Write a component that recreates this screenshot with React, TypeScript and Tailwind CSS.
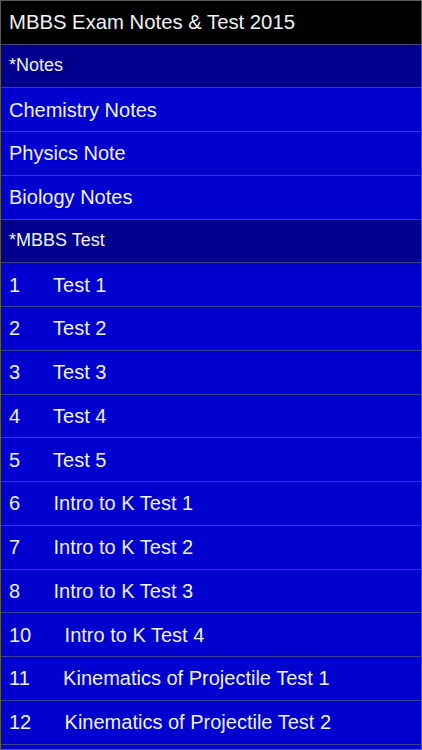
import React from 'react';

type Row = { label: string; kind: 'section' | 'item' };

const rows: Row[] = [
  { label: '*Notes', kind: 'section' },
  { label: 'Chemistry Notes', kind: 'item' },
  { label: 'Physics Note', kind: 'item' },
  { label: 'Biology Notes', kind: 'item' },
  { label: '*MBBS Test', kind: 'section' },
  { label: '1      Test 1', kind: 'item' },
  { label: '2      Test 2', kind: 'item' },
  { label: '3      Test 3', kind: 'item' },
  { label: '4      Test 4', kind: 'item' },
  { label: '5      Test 5', kind: 'item' },
  { label: '6      Intro to K Test 1', kind: 'item' },
  { label: '7      Intro to K Test 2', kind: 'item' },
  { label: '8      Intro to K Test 3', kind: 'item' },
  { label: '10      Intro to K Test 4', kind: 'item' },
  { label: '11      Kinematics of Projectile Test 1', kind: 'item' },
  { label: '12      Kinematics of Projectile Test 2', kind: 'item' },
  // next row only peeks in at the bottom edge
  { label: '', kind: 'item' },
];

const App = () => {
  return (
    <div
      className="w-[422px] h-[750px] overflow-hidden border border-[#5a5a5a] bg-black text-[#f2f2f2]"
      style={{ fontFamily: '"Liberation Sans", Arial, sans-serif' }}
    >
      <div className="h-[43.5px] flex items-center px-2 bg-black border-b border-[#4a4a7a] text-[20.3px]">
        MBBS Exam Notes &amp; Test 2015
      </div>
      {rows.map((row, i) => (
        <div
          key={i}
          className={
            row.kind === 'section'
              ? 'h-[43.75px] flex items-center px-2 bg-[#00008c] border-b border-[#3f3f8f] text-[18px] whitespace-pre'
              : 'h-[43.75px] flex items-center px-2 bg-[#0000cf] border-b border-[#3f3f8f] text-[20px] whitespace-pre'
          }
        >
          {row.label}
        </div>
      ))}
    </div>
  );
};

export default App;
